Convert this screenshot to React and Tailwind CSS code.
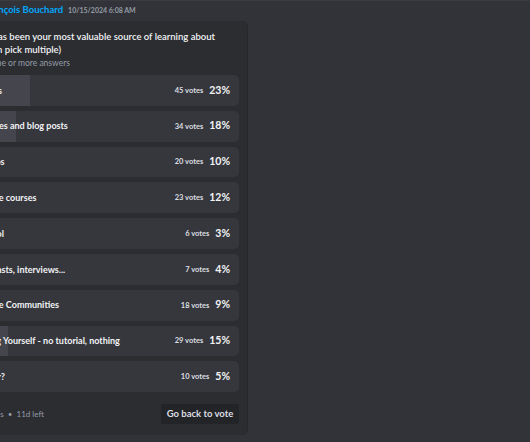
import React from 'react';

const options = [
  { label: 'Books', votes: 45, pct: 23 },
  { label: 'Articles and blog posts', votes: 34, pct: 18 },
  { label: 'Videos', votes: 20, pct: 10 },
  { label: 'Online courses', votes: 23, pct: 12 },
  { label: 'School', votes: 6, pct: 3 },
  { label: 'Podcasts, interviews...', votes: 7, pct: 4 },
  { label: 'Online Communities', votes: 18, pct: 9 },
  { label: 'Doing Yourself - no tutorial, nothing', votes: 29, pct: 15 },
  { label: 'Other?', votes: 10, pct: 5 },
];

const font = { fontFamily: 'Lato, "Noto Sans", sans-serif' };

export default function App() {
  return (
    <div className="w-[530px] h-[442px] bg-[#313338] overflow-hidden border-t border-[#393b41]" style={font}>
      <div className="-ml-[41px] w-[289px]">
        {/* author line */}
        <div className="flex items-baseline gap-[5px] pl-[26px] pt-[2px] h-[20px] whitespace-nowrap">
          <span className="text-[9.5px] font-bold text-[#00a8fc]">François Bouchard</span>
          <span className="text-[7px] font-bold text-[#949ba4]">10/15/2024 6:08 AM</span>
        </div>

        {/* poll card */}
        <div className="bg-[#2b2d31] rounded-[6px] px-[8px] pt-[9px] pb-[11px] border-r border-[#27282c]">
          <div className="text-[9.5px] leading-[13px] font-semibold text-[#f2f3f5] whitespace-nowrap">
            What has been your most valuable source of learning about
            <br />
            (You can pick multiple)
          </div>
          <div className="text-[8.5px] leading-[11px] text-[#949ba4] mt-[2px] mb-[6px] whitespace-nowrap">Select one or more answers</div>

          <div className="flex flex-col gap-[5px]">
            {options.map((o) => (
              <div key={o.label} className="relative h-[30.8px] rounded-[5px] bg-[#36373d] overflow-hidden">
                <div className="absolute inset-y-0 left-0 bg-[#45464d]" style={{ width: `${o.pct}%` }} />
                <div className="relative h-full flex items-center justify-between pl-[10px] pr-[9px] whitespace-nowrap">
                  <span className="text-[9px] font-bold text-[#f2f3f5]">{o.label}</span>
                  <span className="flex items-center gap-[6px]">
                    <span className="text-[7.5px] font-bold text-[#dbdee1]">{o.votes} votes</span>
                    <span className="text-[10.5px] font-bold text-[#f2f3f5]">{o.pct}%</span>
                  </span>
                </div>
              </div>
            ))}
          </div>

          <div className="flex items-center justify-between mt-[12px] whitespace-nowrap">
            <span className="pl-[2px] text-[8px] text-[#949ba4]">
              192 votes <span className="mx-[2px]">•</span> 11d left
            </span>
            <button className="h-[20px] w-[78px] rounded-[3px] bg-[#232428] text-[9.5px] font-bold text-[#dbdee1]">
              Go back to vote
            </button>
          </div>
        </div>
      </div>
    </div>
  );
}
